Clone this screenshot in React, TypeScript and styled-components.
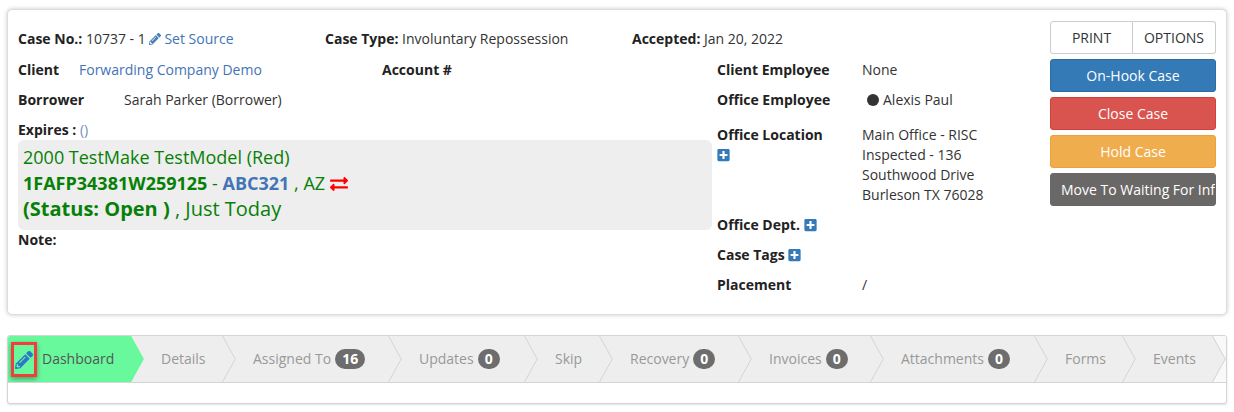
import React from "react";
import styled, { createGlobalStyle } from "styled-components";
import { FaPencilAlt, FaPlusSquare, FaExchangeAlt } from "react-icons/fa";

const GlobalStyle = createGlobalStyle`
  html, body {
    margin: 0;
    padding: 0;
    background: #fff;
  }
  body {
    font-family: "Open Sans", sans-serif;
    font-size: 14px;
    line-height: 20px;
    color: #333;
  }
`;

const Page = styled.div`
  width: 1234px;
  height: 412px;
  overflow: hidden;
  padding: 9px 7px 0 7px;
  box-sizing: border-box;
`;

const CaseCard = styled.section`
  display: flex;
  height: 306px;
  box-sizing: border-box;
  padding: 11px 10px 0 10px;
  border: 1px solid #ddd;
  border-radius: 5px;
  box-shadow: 0 0 4px rgba(0, 0, 0, 0.22);
  background: #fff;
`;

const Main = styled.div`
  width: 1021px;
`;

const TopRow = styled.div`
  display: grid;
  grid-template-columns: 307px 307px 1fr;
  height: 34px;
  padding-top: 8px;
  box-sizing: border-box;
`;

const Columns = styled.div`
  display: grid;
  grid-template-columns: 699px 1fr;
`;

const LeftColumn = styled.div`
  display: flex;
  flex-direction: column;
`;

const Row = styled.div<{ $label?: number }>`
  display: grid;
  grid-template-columns: ${(p) => (p.$label ? `${p.$label}px` : "auto")} 1fr;
  height: 30px;
  align-items: center;
`;

const SplitRow = styled.div`
  display: grid;
  grid-template-columns: 364px 1fr;
  height: 30px;
  align-items: center;
`;

const Label = styled.span`
  font-weight: 700;
  color: #222;
`;

const Value = styled.span`
  color: #333;
`;

const Link = styled.a`
  color: #4374b5;
  text-decoration: none;
`;

const PencilIcon = styled(FaPencilAlt)`
  width: 12px;
  height: 12px;
  color: #4a7fb5;
  vertical-align: -1px;
  margin: 0 3px 0 0;
`;

const ExpiresRow = styled.div`
  height: 20px;
  line-height: 20px;
  margin-top: 5px;
`;

const Parens = styled.span`
  color: #6f8fbd;
`;

const VehicleBox = styled.div`
  width: 694px;
  height: 90px;
  padding: 4px 5px;
  box-sizing: border-box;
  border-radius: 6px;
  background: #eee;
  color: #078007;
  font-size: 18px;
  line-height: 26px;
`;

const VehicleLine = styled.div`
  white-space: nowrap;
`;

const StatusLine = styled(VehicleLine)`
  font-size: 20px;
`;

const Strong = styled.strong`
  font-weight: 700;
`;

const Plate = styled.strong`
  font-weight: 700;
  color: #4374b5;
`;

const SwapIcon = styled(FaExchangeAlt)`
  width: 18px;
  height: 18px;
  color: #f00;
  vertical-align: -3px;
`;

const NoteRow = styled.div`
  height: 20px;
`;

const RightColumn = styled.div`
  display: flex;
  flex-direction: column;
`;

const DetailRow = styled.div`
  display: grid;
  grid-template-columns: 145px 1fr;
  height: 30px;
  align-items: center;
`;

const LocationRow = styled.div`
  display: grid;
  grid-template-columns: 145px 1fr;
  height: 95px;
  padding-top: 10px;
  box-sizing: border-box;
`;

const Address = styled.div`
  color: #333;
`;

const PlusIcon = styled(FaPlusSquare)`
  width: 13px;
  height: 14px;
  color: #337ab7;
  vertical-align: -2px;
`;

const PlusBlock = styled.div`
  height: 20px;
`;

const Dot = styled.span`
  display: inline-block;
  width: 12px;
  height: 12px;
  margin: 0 4px 0 5px;
  border-radius: 50%;
  background: #333;
  vertical-align: -1px;
`;

const Actions = styled.div`
  width: 166px;
  margin-left: auto;
  display: flex;
  flex-direction: column;
  gap: 5px;
`;

const ButtonPair = styled.div`
  display: grid;
  grid-template-columns: 1fr 1fr;
`;

const PlainButton = styled.button`
  height: 33px;
  padding: 0;
  border: 1px solid #ccc;
  background: #fff;
  color: #333;
  font: 400 14px "Open Sans", sans-serif;
  border-radius: 3px 0 0 3px;
  & + & {
    border-left-width: 0;
    border-radius: 0 3px 3px 0;
  }
`;

const ActionButton = styled.button<{ $bg: string; $line: string }>`
  height: 33px;
  padding: 0 10px;
  border: 1px solid ${(p) => p.$line};
  border-radius: 3px;
  background: ${(p) => p.$bg};
  color: #fff;
  font: 400 14px "Open Sans", sans-serif;
  white-space: nowrap;
  overflow: hidden;
  text-align: center;
`;

const WideButton = styled(ActionButton)`
  text-align: left;
`;

const TabCard = styled.section`
  height: 69px;
  margin-top: 20px;
  box-sizing: border-box;
  border: 1px solid #d4d4d4;
  border-radius: 3px;
  box-shadow: 0 1px 2px rgba(0, 0, 0, 0.12);
  background: #fff;
  overflow: hidden;
`;

const TabBar = styled.div`
  display: flex;
  height: 46px;
  border-bottom: 1px solid #d4d4d4;
  overflow: hidden;
  background: #f9f9f9;
`;

const Tab = styled.div<{ $active?: boolean; $order: number; $width: number }>`
  position: relative;
  flex: 0 0 ${(p) => p.$width}px;
  display: flex;
  align-items: center;
  box-sizing: border-box;
  padding-left: ${(p) => (p.$active ? 34 : 30)}px;
  background: ${(p) => (p.$active ? "#69f99d" : "#eee")};
  color: ${(p) => (p.$active ? "#555" : "#999")};
  z-index: ${(p) => 20 - p.$order};
  white-space: nowrap;

  &::before,
  &::after {
    content: "";
    position: absolute;
    right: 0;
    width: 30px;
    height: 50%;
    box-sizing: border-box;
    background: ${(p) => (p.$active ? "#69f99d" : "#eee")};
    border-right: 1px solid ${(p) => (p.$active ? "#69f99d" : "#d4d4d4")};
  }
  &::before {
    top: 0;
    transform-origin: top right;
    transform: skewX(29deg);
  }
  &::after {
    bottom: 0;
    transform-origin: bottom right;
    transform: skewX(-29deg);
  }
`;

const TabLabel = styled.span`
  position: relative;
  z-index: 1;
`;

const Count = styled.span`
  position: relative;
  z-index: 1;
  display: inline-block;
  min-width: 8px;
  margin-left: 4px;
  padding: 0 7px;
  height: 20px;
  border-radius: 10px;
  background: #6d6d6d;
  color: #fff;
  font-size: 14px;
  font-weight: 700;
  line-height: 20px;
  text-align: center;
`;

const DashIconBox = styled.span`
  position: absolute;
  left: 3px;
  top: 6px;
  z-index: 2;
  width: 26px;
  height: 35px;
  box-sizing: border-box;
  display: flex;
  align-items: center;
  justify-content: center;
  border: 3px solid #f23d3d;
  box-shadow: 0 2px 5px rgba(0, 0, 0, 0.35);
`;

const DashPencil = styled(FaPencilAlt)`
  width: 18px;
  height: 18px;
  color: #2f76c9;
`;

const tabs = [
  { name: "Details", width: 92 },
  { name: "Assigned To", width: 166, count: 16 },
  { name: "Updates", width: 136, count: 0 },
  { name: "Skip", width: 75 },
  { name: "Recovery", width: 139, count: 0 },
  { name: "Invoices", width: 132, count: 0 },
  { name: "Attachments", width: 164, count: 0 },
  { name: "Forms", width: 88 },
  { name: "Events", width: 90 },
];

export default function App() {
  return (
    <Page>
      <GlobalStyle />
      <CaseCard>
        <Main>
          <TopRow>
            <div>
              <Label>Case No.:</Label> <Value>10737 - 1</Value> <PencilIcon />
              <Link>Set Source</Link>
            </div>
            <div>
              <Label>Case Type:</Label> <Value>Involuntary Repossession</Value>
            </div>
            <div>
              <Label>Accepted:</Label> <Value>Jan 20, 2022</Value>
            </div>
          </TopRow>
          <Columns>
            <LeftColumn>
              <SplitRow>
                <Row $label={61}>
                  <Label>Client</Label>
                  <Link>Forwarding Company Demo</Link>
                </Row>
                <Label>Account #</Label>
              </SplitRow>
              <Row $label={106}>
                <Label>Borrower</Label>
                <Value>Sarah Parker (Borrower)</Value>
              </Row>
              <ExpiresRow>
                <Label>Expires :</Label> <Parens>()</Parens>
              </ExpiresRow>
              <VehicleBox>
                <VehicleLine>2000 TestMake TestModel (Red)</VehicleLine>
                <VehicleLine>
                  <Strong>1FAFP34381W259125</Strong> - <Plate>ABC321</Plate> , AZ <SwapIcon />
                </VehicleLine>
                <StatusLine>
                  <Strong>(Status: Open )</Strong> , Just Today
                </StatusLine>
              </VehicleBox>
              <NoteRow>
                <Label>Note:</Label>
              </NoteRow>
            </LeftColumn>
            <RightColumn>
              <DetailRow>
                <Label>Client Employee</Label>
                <Value>None</Value>
              </DetailRow>
              <DetailRow>
                <Label>Office Employee</Label>
                <Value>
                  <Dot />
                  Alexis Paul
                </Value>
              </DetailRow>
              <LocationRow>
                <div>
                  <Label>Office Location</Label>
                  <PlusBlock>
                    <PlusIcon />
                  </PlusBlock>
                </div>
                <Address>
                  Main Office - RISC
                  <br />
                  Inspected - 136
                  <br />
                  Southwood Drive
                  <br />
                  Burleson TX 76028
                </Address>
              </LocationRow>
              <DetailRow>
                <div>
                  <Label>Office Dept.</Label> <PlusIcon />
                </div>
              </DetailRow>
              <DetailRow>
                <div>
                  <Label>Case Tags</Label> <PlusIcon />
                </div>
              </DetailRow>
              <DetailRow>
                <Label>Placement</Label>
                <Value>/</Value>
              </DetailRow>
            </RightColumn>
          </Columns>
        </Main>
        <Actions>
          <ButtonPair>
            <PlainButton>PRINT</PlainButton>
            <PlainButton>OPTIONS</PlainButton>
          </ButtonPair>
          <ActionButton $bg="#337ab7" $line="#2e6da4">On-Hook Case</ActionButton>
          <ActionButton $bg="#d9534f" $line="#d43f3a">Close Case</ActionButton>
          <ActionButton $bg="#f0ad4e" $line="#eea236">Hold Case</ActionButton>
          <WideButton $bg="#6a6867" $line="#6a6867">Move To Waiting For Info</WideButton>
        </Actions>
      </CaseCard>
      <TabCard>
        <TabBar>
          <Tab $active $order={0} $width={123}>
            <DashIconBox>
              <DashPencil />
            </DashIconBox>
            <TabLabel>Dashboard</TabLabel>
          </Tab>
          {tabs.map((tab, i) => (
            <Tab key={tab.name} $order={i + 1} $width={tab.width}>
              <TabLabel>{tab.name}</TabLabel>
              {tab.count !== undefined && <Count>{tab.count}</Count>}
            </Tab>
          ))}
        </TabBar>
      </TabCard>
    </Page>
  );
}
